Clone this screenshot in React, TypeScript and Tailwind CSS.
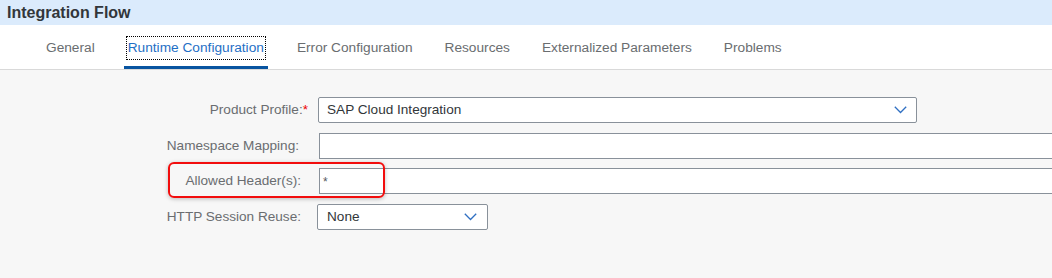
const tabs = [
  "General",
  "Runtime Configuration",
  "Error Configuration",
  "Resources",
  "Externalized Parameters",
  "Problems",
];

function Chevron() {
  return (
    <svg width="13" height="8" viewBox="0 0 13 8" className="shrink-0">
      <polyline
        points="0.8,0.8 6.5,6.5 12.2,0.8"
        fill="none"
        stroke="#2f6fc2"
        strokeWidth="1.3"
      />
    </svg>
  );
}

export default function App() {
  return (
    <div className="flex h-[278px] w-[1052px] flex-col overflow-hidden bg-[#f7f7f7] font-['Liberation_Sans',Arial,sans-serif]">
      {/* header */}
      <div className="flex h-[25px] shrink-0 items-center bg-[#dbebfc] px-[7px]">
        <span className="text-[16px] font-bold text-[#32363a]">Integration Flow</span>
      </div>

      {/* tabs */}
      <div className="flex h-[45px] shrink-0 items-stretch gap-[26px] border-b border-[#d9d9d9] bg-white pl-[43px]">
        {tabs.map((t) => {
          const active = t === "Runtime Configuration";
          return (
            <div
              key={t}
              className={
                active
                  ? "flex items-center border-b-[3px] border-[#0854a0] px-[3px] pt-[5px]"
                  : "flex items-center border-b-[3px] border-transparent px-[3px] pt-[5px]"
              }
            >
              <span
                className={
                  active
                    ? "px-[1px] py-[1px] text-[13.7px] text-[#1f6fc5] outline-1 outline-dotted outline-black"
                    : "text-[13.7px] text-[#6a6d70]"
                }
              >
                {t}
              </span>
            </div>
          );
        })}
      </div>

      {/* form */}
      <div className="relative flex-1 pt-[27px]">
        <div className="grid grid-cols-[308px_1fr] items-center gap-x-[10px] text-[13.6px]">
          <div className="text-right text-[#6a6d70]">
            Product Profile:<span className="text-[#e00]">*</span>
          </div>
          <div className="flex h-[26px] w-[599px] items-center justify-between rounded-[2px] border border-[#89919a] bg-white pl-[8px] pr-[9px] text-[#32363a]">
            <span>SAP Cloud Integration</span>
            <Chevron />
          </div>

          <div className="mt-[10px] pr-[9px] text-right text-[#6a6d70]">Namespace Mapping:</div>
          <div className="ml-[1px] mt-[10px] h-[26px] w-[760px] border border-[#89919a] bg-white" />

          <div className="mt-[9px] pr-[7px] text-right text-[#6a6d70]">Allowed Header(s):</div>
          <div className="ml-[1px] mt-[9px] flex h-[26px] w-[760px] items-start border border-[#89919a] bg-white pl-[3px] pt-[4px] text-[12px] text-[#55595e]">
            *
          </div>

          <div className="mt-[10px] pr-[7px] text-right text-[#6a6d70]">HTTP Session Reuse:</div>
          <div className="-ml-[1px] mt-[10px] flex h-[26px] w-[171px] items-center justify-between rounded-[2px] border border-[#89919a] bg-white pl-[9px] pr-[10px] text-[#32363a]">
            <span>None</span>
            <Chevron />
          </div>
        </div>

        {/* highlight box */}
        <div className="absolute left-[168px] top-[92px] h-[36px] w-[217px] rounded-[6px] border-2 border-[#f20d0d] shadow-[0_1px_4px_rgba(0,0,0,0.25)]" />
      </div>
    </div>
  );
}
